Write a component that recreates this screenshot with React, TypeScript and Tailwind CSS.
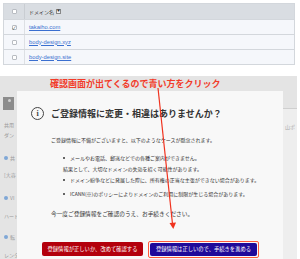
const jp = { fontFamily: '"Noto Sans CJK JP", "Noto Sans", sans-serif' };

const domains = [
  { name: "takaiho.com", checked: true },
  { name: "body-design.xyz", checked: false },
  { name: "body-design.site", checked: false },
];

function Box({ checked }: { checked?: boolean }) {
  return (
    <div className="flex h-[5px] w-[5px] items-center justify-center rounded-[1px] border border-[#b8bcc2] bg-white">
      {checked && <span className="text-[5px] leading-none text-[#444]">✓</span>}
    </div>
  );
}

function SideItem({ dot, text }: { dot?: boolean; text: string }) {
  return (
    <div className="flex h-[10px] items-center gap-[2px] whitespace-nowrap pl-[4px] text-[5px] text-[#999]">
      {dot && <span className="h-[4px] w-[4px] rounded-full bg-[#7fa7d6]" />}
      <span>{text}</span>
    </div>
  );
}

export default function App() {
  return (
    <div className="relative h-[259px] w-[300px] overflow-hidden bg-white" style={jp}>
      {/* domain table */}
      <div className="px-[3px] pt-[3px] pr-[5px]">
        <div className="border border-[#d3d7dc]">
          <div className="flex h-[15px] items-center bg-[#d9dde2]">
            <div className="flex w-[21px] items-center justify-center self-stretch border-r border-[#c9cdd2]">
              <Box />
            </div>
            <div className="flex items-center gap-[2px] pl-[4px] text-[5px] text-[#333]">
              ドメイン名
              <span className="flex h-[5px] w-[5px] items-center justify-center border border-[#888] bg-[#eee] text-[3px]">▼</span>
            </div>
          </div>
          {domains.map((d) => (
            <div key={d.name} className="flex h-[15px] items-center border-t border-[#d3d7dc] bg-[#f5f7fb]">
              <div className="flex w-[21px] items-center justify-center self-stretch border-r border-[#dde0e4]">
                <Box checked={d.checked} />
              </div>
              <span className="pl-[4px] text-[5.8px] text-[#3a6fd0] underline" style={{ fontFamily: '"Liberation Sans", sans-serif' }}>
                {d.name}
              </span>
            </div>
          ))}
        </div>
      </div>

      {/* screenshot of dialog */}
      <div className="mt-[11px] w-[297px] bg-[#e4e4e4]">
        <div className="flex h-[15px] items-center pl-[50px] text-[9px] font-bold leading-none text-[#f23b29]">
          確認画面が出てくるので青い方をクリック
        </div>
        <div className="flex h-[169px]">
          <div className="flex w-[17px] flex-col">
            <div className="mx-[3px] mt-[6px] flex h-[13px] items-start bg-[#8c8c8c] pl-[5px] pt-[2px]">
              <span className="h-[3px] w-[3px] rounded-full bg-[#d0d0d0]" />
            </div>
            <div className="mt-[10px]" />
            <SideItem text="共用" />
            <SideItem text="ダン" />
            <div className="h-[13px]" />
            <SideItem dot text="共" />
            <div className="h-[7px]" />
            <SideItem text="[大容" />
            <div className="h-[13px]" />
            <SideItem dot text="VI" />
            <div className="h-[8px]" />
            <SideItem text="ハード" />
            <div className="h-[11px]" />
            <SideItem dot text="転" />
            <div className="h-[8px]" />
            <SideItem text="レンタ" />
          </div>

          <div className="flex w-[266px] flex-col bg-[#f8f8f8]">
            <div className="mt-[16px] flex items-center">
              <div className="ml-[14px] flex h-[13px] w-[13px] items-center justify-center rounded-full border-[1.2px] border-[#444] text-[8px] font-bold leading-none text-[#444]" style={{ fontFamily: '"Liberation Serif", serif' }}>
                i
              </div>
              <div className="ml-[7px] text-[9px] font-bold leading-none text-[#333]">
                ご登録情報に変更・相違はありませんか？
              </div>
            </div>
            <div className="ml-[34px] mt-[17px] text-[5px] leading-none text-[#333]">
              ご登録情報に不備がございますと、以下のようなケースが懸念されます。
            </div>
            <div className="ml-[46px] mt-[13px] flex flex-col text-[5px] leading-none text-[#333]">
              <div className="flex items-center gap-[5px]">
                <span className="h-[2px] w-[2px] rounded-full bg-[#333]" />
                メールやお電話、郵送などでの各種ご案内ができません。
              </div>
              <div className="mt-[6px]">結果として、大切なドメインの失効を招く可能性があります。</div>
              <div className="mt-[6px] flex items-center gap-[5px]">
                <span className="h-[2px] w-[2px] rounded-full bg-[#333]" />
                ドメイン紛争などに発展した際に、所有権の正当な主張ができない場合があります。
              </div>
              <div className="mt-[9px] flex items-center gap-[5px]">
                <span className="h-[2px] w-[2px] rounded-full bg-[#333]" />
                ICANN(※)のポリシーによりドメインのご利用に制限が生じる場合があります。
              </div>
            </div>
            <div className="ml-[34px] mt-[15px] text-[5.7px] leading-none text-[#333]">
              今一度ご登録情報をご確認のうえ、お手続きください。
            </div>
            <div className="mt-[24px] flex items-center">
              <div className="ml-[25px] flex h-[14px] w-[101px] items-center justify-center rounded-[2px] bg-[#b3000c] text-[5.3px] leading-none text-white">
                登録情報が正しいか、改めて確認する
              </div>
              <div className="ml-[5px] rounded-[2px] border-[1.5px] border-[#ff5a3c] p-[1px]">
                <div className="flex h-[13px] w-[107px] items-center justify-center rounded-[2px] bg-[#1f0a9a] text-[5.3px] leading-none text-white">
                  登録情報は正しいので、手続きを進める
                </div>
              </div>
            </div>
          </div>

          <div className="flex w-[14px] flex-col">
            <div className="h-[18px] border-b border-[#cfcfcf]" />
            <div className="flex-1 overflow-hidden whitespace-nowrap bg-[#eeeeee] pl-[2px] pt-[14px] text-[5px] text-[#aaa]">
              山ポ
            </div>
          </div>
        </div>
      </div>

      {/* red arrow */}
      <svg className="absolute left-0 top-0" width="300" height="259" viewBox="0 0 300 259">
        <line x1="158" y1="88" x2="172.5" y2="224" stroke="#f0321e" strokeWidth="1.2" />
        <polygon points="169.5,223 176,222.5 173.3,229" fill="#f0321e" />
      </svg>
    </div>
  );
}
